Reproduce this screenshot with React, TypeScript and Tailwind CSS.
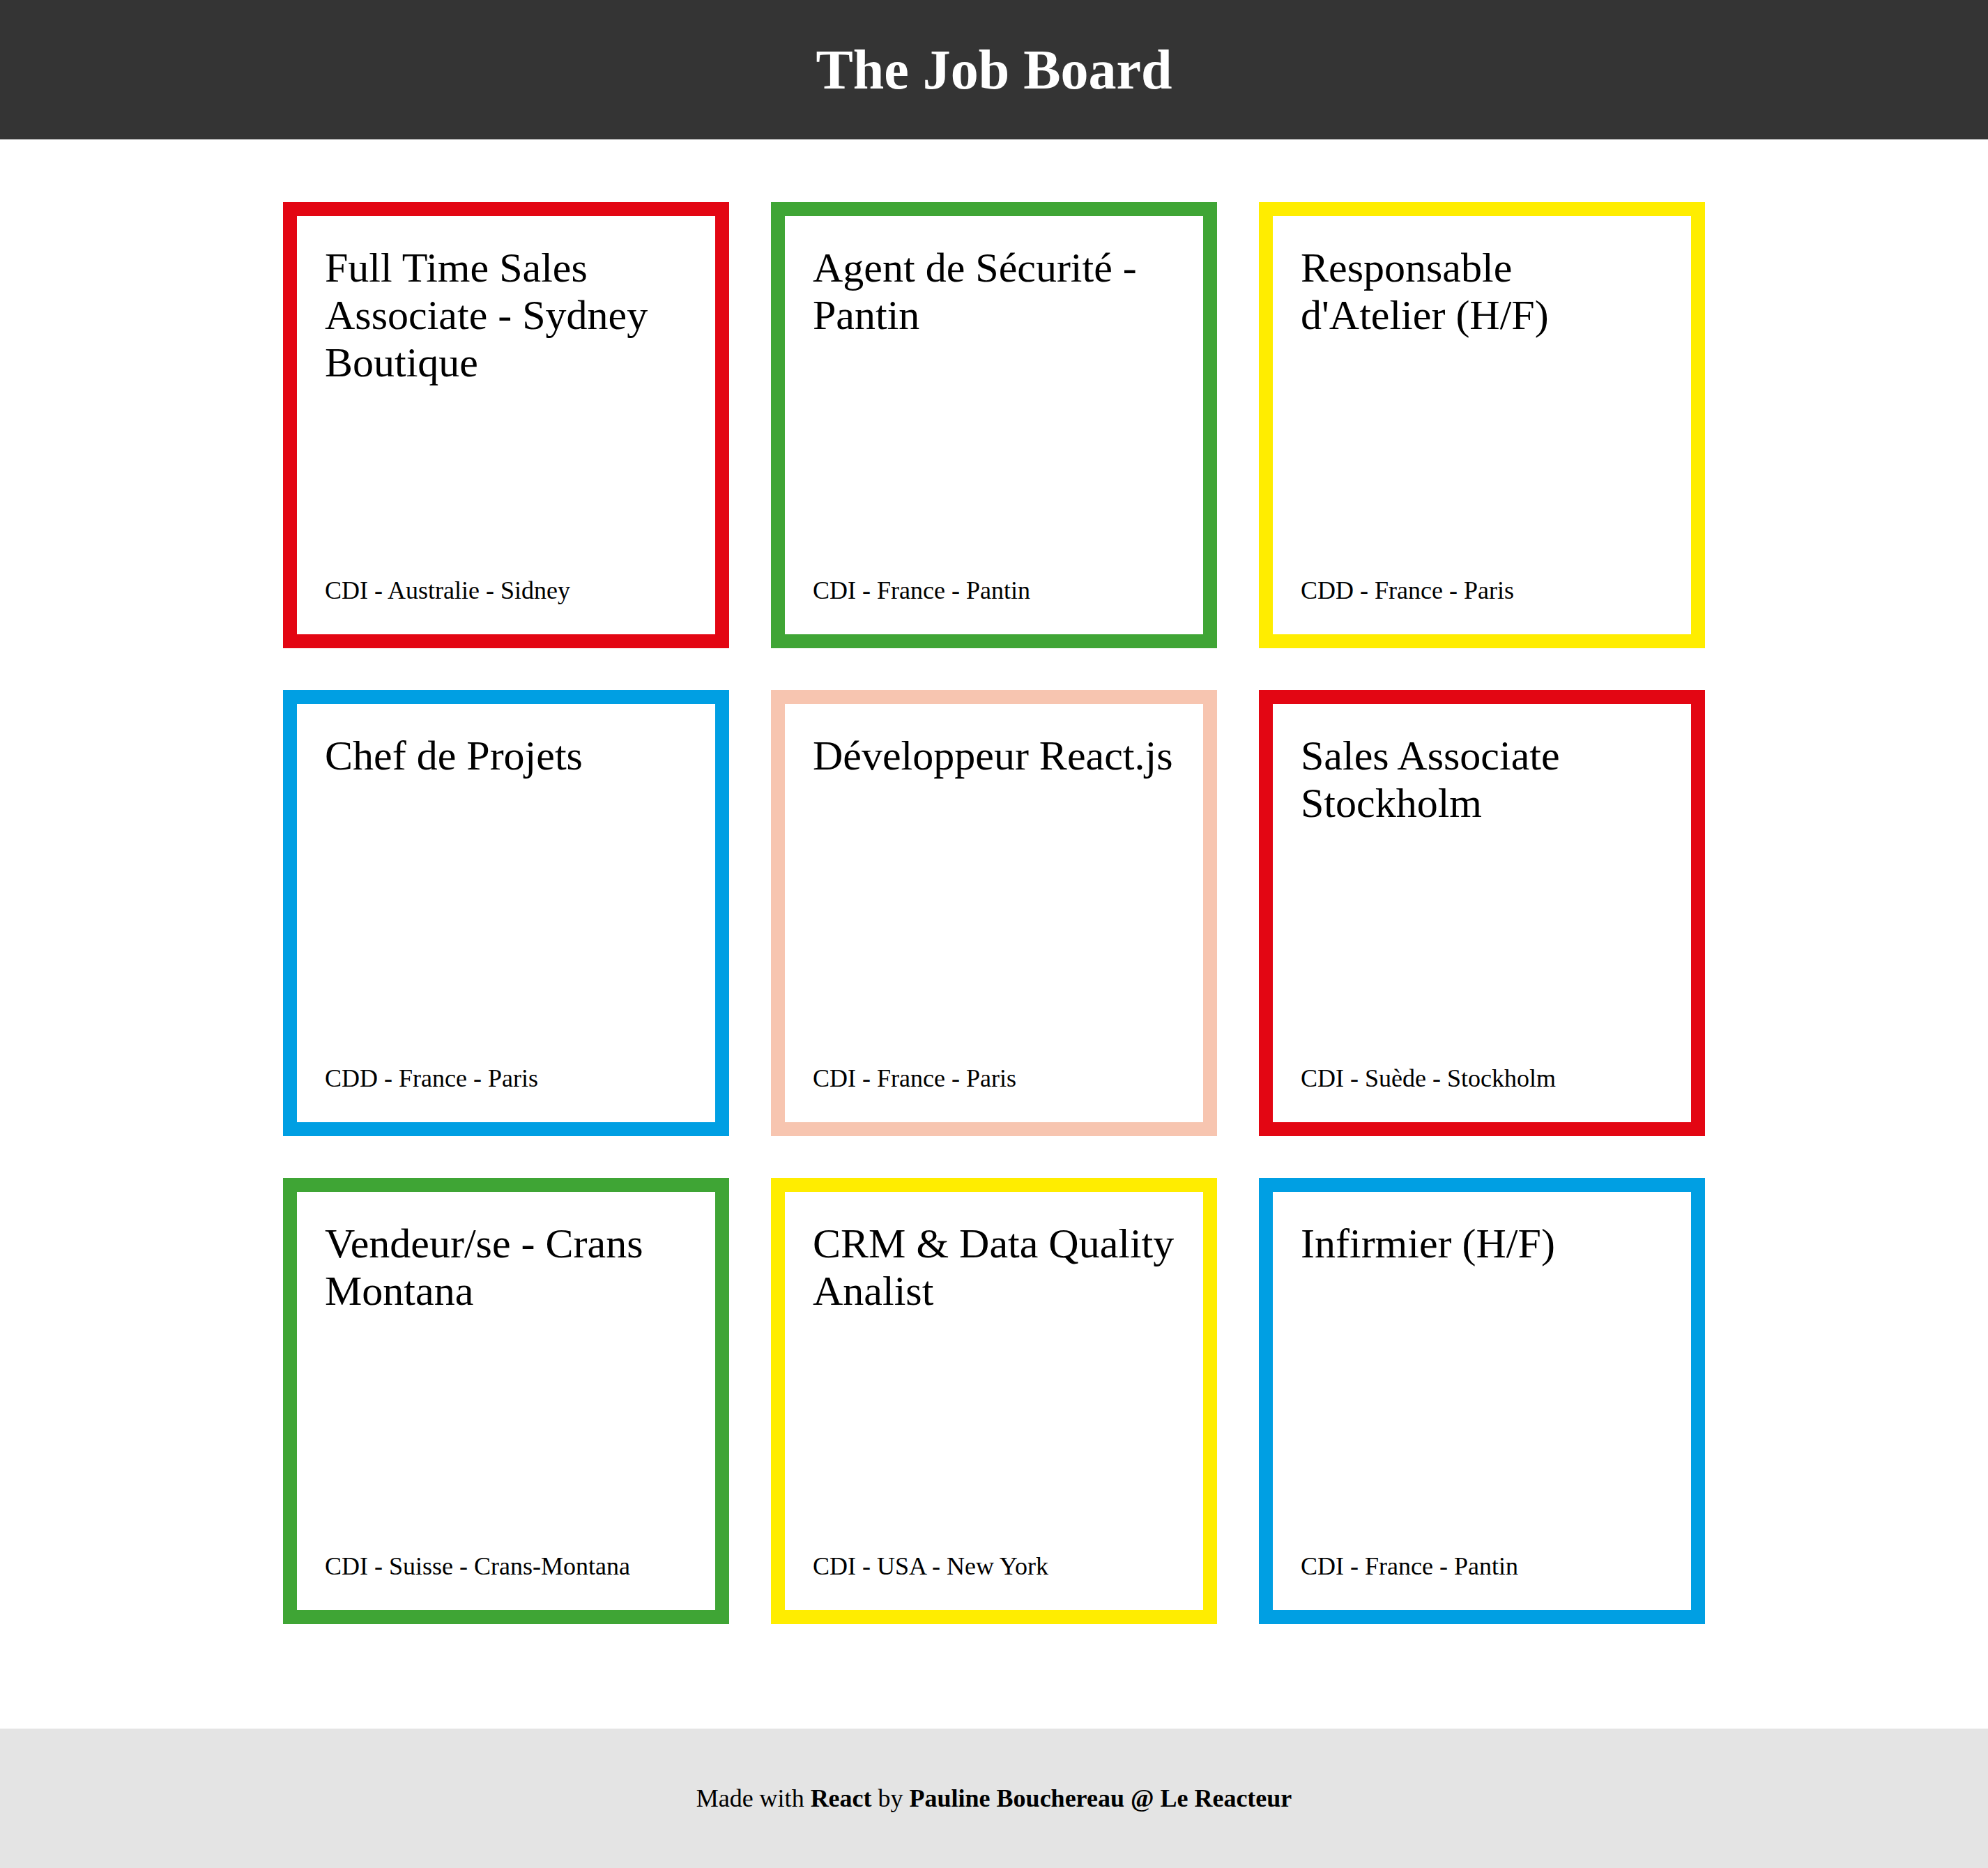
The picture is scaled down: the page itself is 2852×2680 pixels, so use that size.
import React from 'react';

interface Job {
  title: string;
  meta: string;
  border: string;
}

const jobs: Job[] = [
  { title: 'Full Time Sales Associate - Sydney Boutique', meta: 'CDI - Australie - Sidney', border: 'border-[#e30613]' },
  { title: 'Agent de Sécurité - Pantin', meta: 'CDI - France - Pantin', border: 'border-[#3fa535]' },
  { title: "Responsable d'Atelier (H/F)", meta: 'CDD - France - Paris', border: 'border-[#ffed00]' },
  { title: 'Chef de Projets', meta: 'CDD - France - Paris', border: 'border-[#009fe3]' },
  { title: 'Développeur React.js', meta: 'CDI - France - Paris', border: 'border-[#f7c5b0]' },
  { title: 'Sales Associate Stockholm', meta: 'CDI - Suède - Stockholm', border: 'border-[#e30613]' },
  { title: 'Vendeur/se - Crans Montana', meta: 'CDI - Suisse - Crans-Montana', border: 'border-[#3fa535]' },
  { title: 'CRM & Data Quality Analist', meta: 'CDI - USA - New York', border: 'border-[#ffed00]' },
  { title: 'Infirmier (H/F)', meta: 'CDI - France - Pantin', border: 'border-[#009fe3]' },
];

const JobCard: React.FC<{ job: Job }> = ({ job }) => (
  <div className={`w-[640px] h-[640px] border-[20px] ${job.border} bg-white p-10 flex flex-col justify-between`}>
    <h2 className="text-[60px] leading-[68px] font-normal">{job.title}</h2>
    <p className="text-[36px] leading-[46px]">{job.meta}</p>
  </div>
);

const App: React.FC = () => {
  return (
    <div className="h-[2680px] flex flex-col bg-white text-black font-['Liberation_Serif','Times_New_Roman',serif]">
      {/* Header */}
      <header className="h-[200px] shrink-0 bg-[#343434] flex items-center justify-center">
        <h1 className="text-white text-[80px] font-bold leading-[92px]">The Job Board</h1>
      </header>

      {/* Jobs */}
      <main className="flex-1 flex justify-center pt-[90px]">
        <div className="grid grid-cols-[repeat(3,640px)] auto-rows-[640px] gap-[60px]">
          {jobs.map((job, i) => (
            <JobCard key={i} job={job} />
          ))}
        </div>
      </main>

      {/* Footer */}
      <footer className="h-[200px] shrink-0 bg-[#e4e4e4] flex items-center justify-center">
        <p className="text-[36px]">
          Made with <b>React</b> by <b>Pauline Bouchereau @ Le Reacteur</b>
        </p>
      </footer>
    </div>
  );
};

export default App;
